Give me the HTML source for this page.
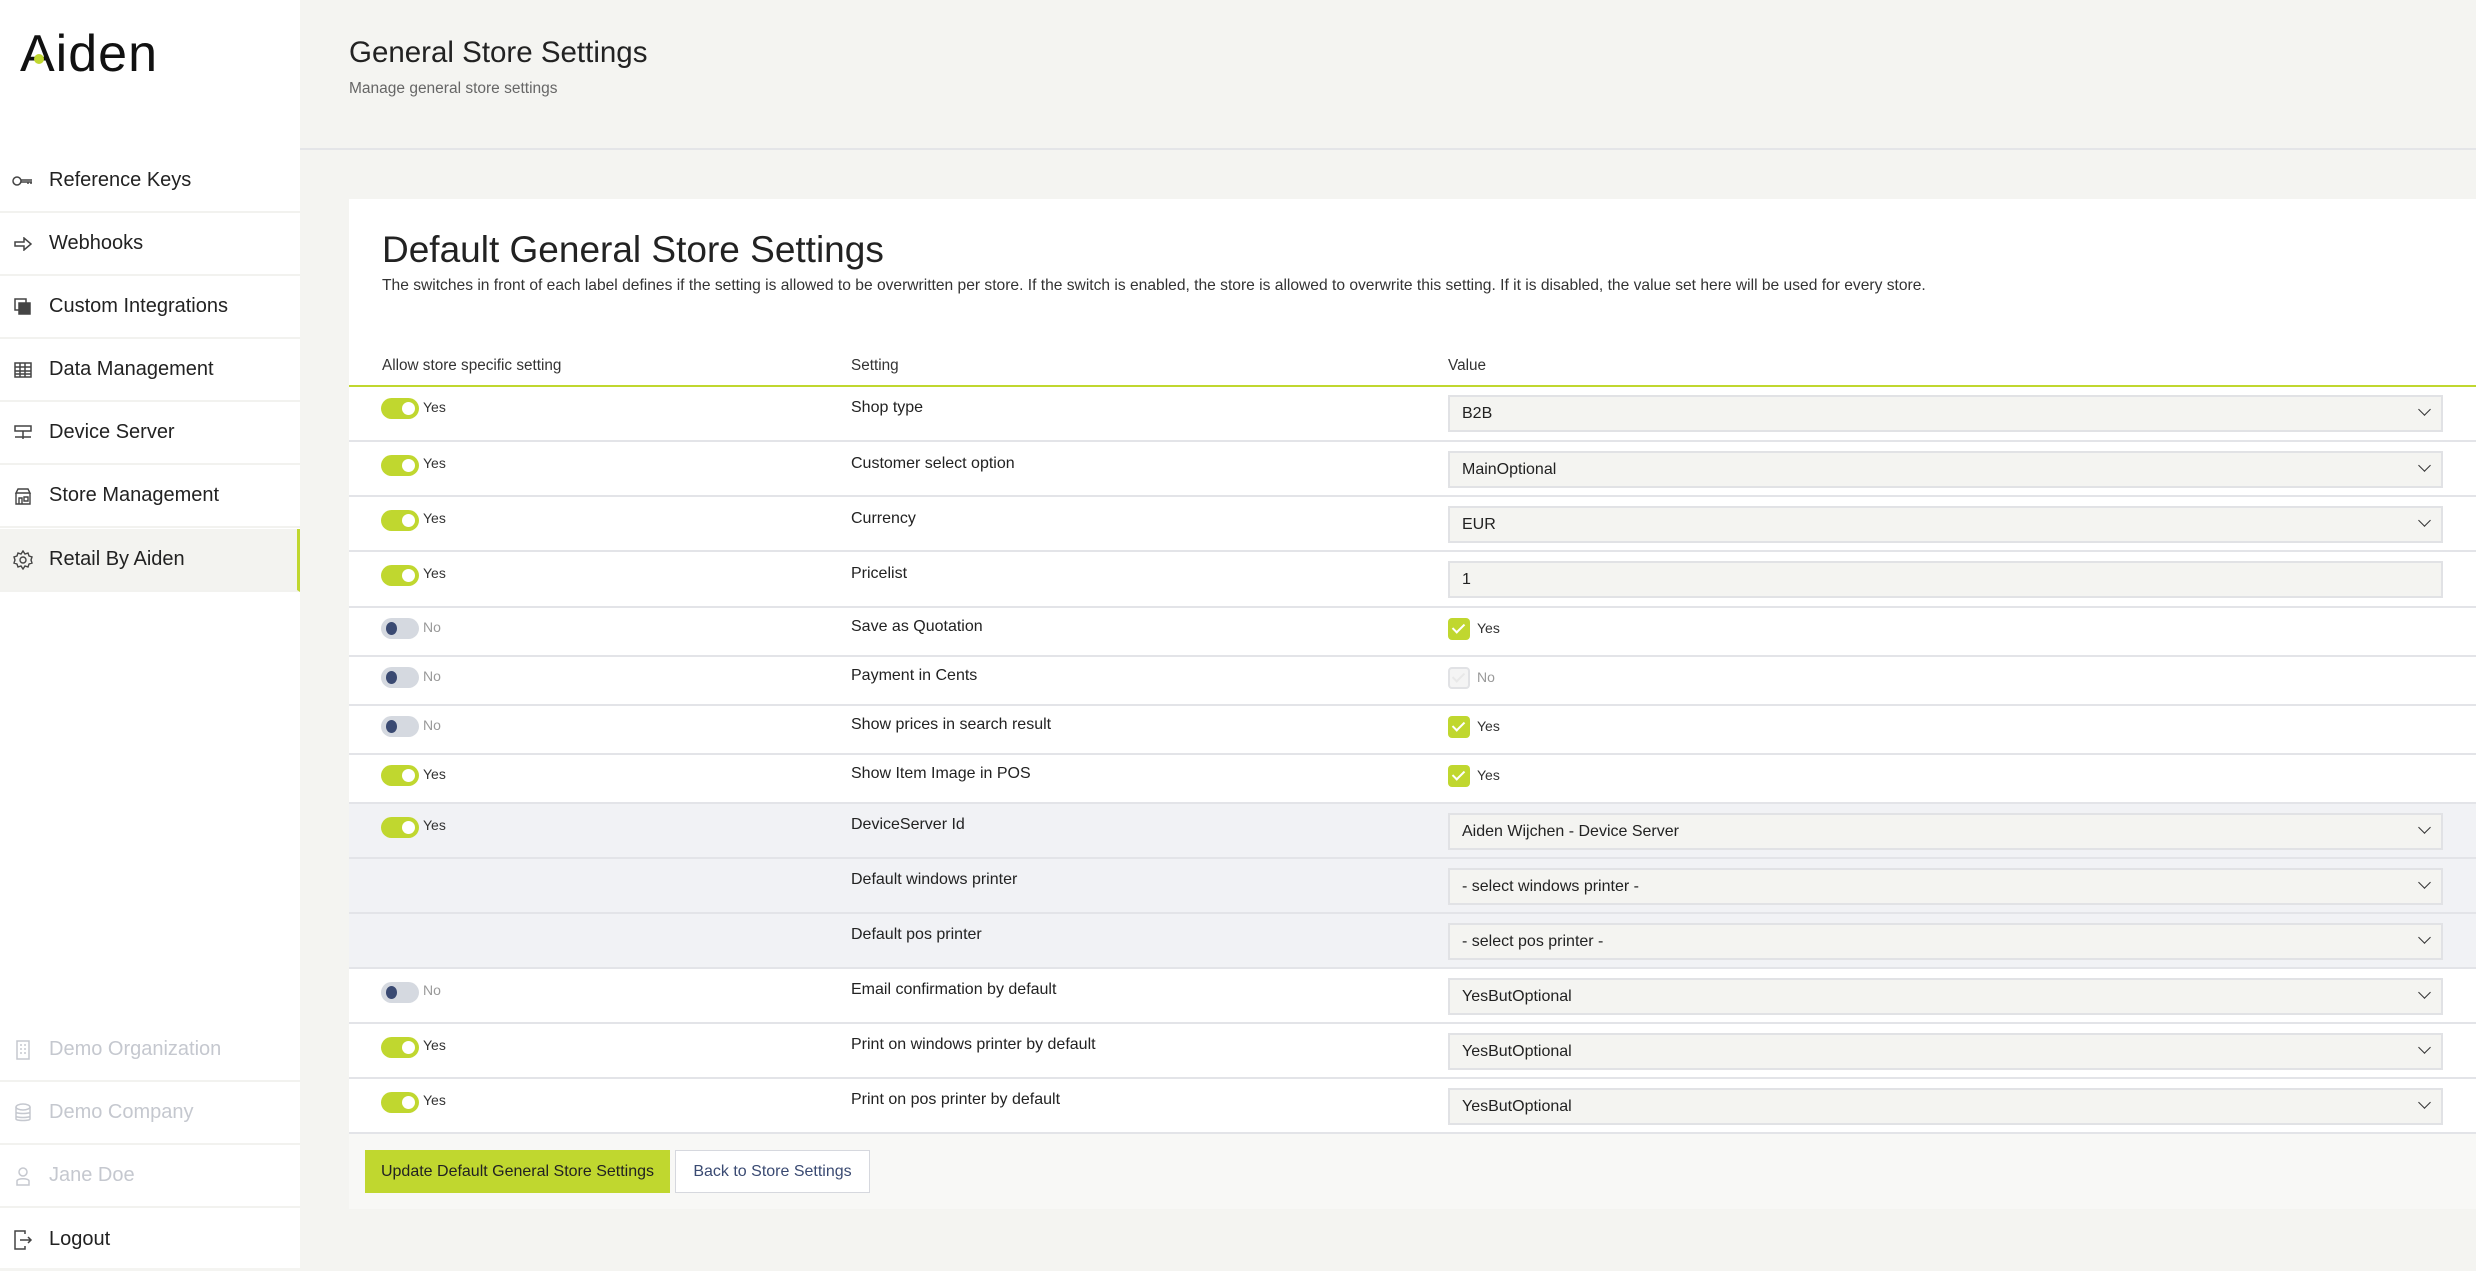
<!DOCTYPE html>
<html><head><meta charset="utf-8"><style>
*{box-sizing:border-box;margin:0;padding:0}
body{width:2476px;height:1268px;background:#f4f4f1;font-family:"Liberation Sans",sans-serif;color:#222;position:relative;overflow:hidden}
.side{position:absolute;left:0;top:0;width:300px;height:1268px;background:#fff}
.logo{position:absolute;left:20px;top:24px;font-size:52px;font-weight:400;letter-spacing:1px;color:#111}
.logo .dot{position:absolute;left:14px;top:30px;width:10px;height:10px;border-radius:50%;background:#c0d72f}
.nav{position:absolute;left:0;width:300px;height:63px;border-bottom:2px solid #f2f2ef;font-size:20px;color:#222;display:flex;align-items:center}
.nav .ic{position:absolute;left:12px;width:22px;height:22px;display:flex;align-items:center;justify-content:center}
.nav span.t{position:absolute;left:49px}
.nav.act{background:#f3f3f0;border-right:3px solid #c0d72f}
.nav.dim{color:#c5c8cf}
.hdr{position:absolute;left:300px;top:0;right:0;height:150px;border-bottom:2px solid #e4e5e8}
.hdr h1{position:absolute;left:49px;top:36px;font-size:29.5px;font-weight:400;color:#222}
.hdr p{position:absolute;left:49px;top:80px;font-size:15.5px;color:#666}
.card{position:absolute;left:349px;top:199px;width:2127px;height:1010px;background:#fff}
.card h2{position:absolute;left:33px;top:30px;font-size:37px;font-weight:400;color:#222}
.card .desc{position:absolute;left:33px;top:78px;font-size:15.6px;color:#333}
.th{position:absolute;top:158px;font-size:15.3px;color:#333}
.hl{position:absolute;left:0;right:0;top:186px;height:2px;background:#c0d72f}
.row{position:absolute;left:0;right:0;border-bottom:2px solid #e3e4e8}
.row.g{background:#f1f2f5}
.tg{position:absolute;left:32px;width:38px;height:21px;border-radius:11px;background:#c0d72f}
.tg::after{content:"";position:absolute;right:4px;top:4px;width:13px;height:13px;border-radius:50%;background:#fff}
.tg.off{background:#d5d9e0}
.tg.off::after{left:5px;right:auto;background:#3a4a72;width:11px}
.yl{position:absolute;left:74px;font-size:14px;color:#333}
.yl.off{color:#999}
.lb{position:absolute;left:502px;font-size:16px;color:#222}
.sel{position:absolute;left:1099px;width:995px;height:37px;background:#f4f4f1;border:2px solid #e1e2e5;font-size:16px;padding:8px 12px;color:#222}
.sel .ch{position:absolute;right:12px;top:8px;width:9px;height:9px;border-right:1.6px solid #333;border-bottom:1.6px solid #333;transform:rotate(45deg)}
.cb{position:absolute;left:1099px;width:22px;height:22px;border-radius:4px;background:#c0d72f}
.cb::after{content:"";position:absolute;left:7px;top:3px;width:5px;height:10px;border-right:2px solid #fff;border-bottom:2px solid #fff;transform:rotate(45deg)}
.cb.off{background:#f4f4f4;border:2px solid #e1e2e5}
.cb.off::after{border-color:#e8e8e8;left:5px;top:1px}
.cl{position:absolute;left:1128px;font-size:14px;color:#333}
.cl.off{color:#999}
.btn{position:absolute;top:951px;height:43px;font-size:16px;display:flex;align-items:center;justify-content:center}
</style></head><body>
<div class="side">
<div class="logo">Aiden<span class="dot"></span></div>
<div class="nav" style="top:150px"><span class="ic"><svg width="22" height="14" viewBox="0 0 22 14" fill="none" stroke="#444" stroke-width="1.5"><circle cx="5" cy="7" r="4"/><path d="M9 6h11M9 8h11M16 8v2M19 8v2"/></svg></span><span class="t">Reference Keys</span></div>
<div class="nav" style="top:213px"><span class="ic"><svg width="18" height="14" viewBox="0 0 18 14" fill="none" stroke="#444" stroke-width="1.5"><path d="M1 5h9V1l7 6-7 6V9H1z"/></svg></span><span class="t">Webhooks</span></div>
<div class="nav" style="top:276px"><span class="ic"><svg width="18" height="18" viewBox="0 0 18 18" fill="none" stroke="#444" stroke-width="1.5"><rect x="1" y="1" width="11" height="11"/><rect x="5" y="5" width="11" height="11" fill="#444"/></svg></span><span class="t">Custom Integrations</span></div>
<div class="nav" style="top:339px"><span class="ic"><svg width="18" height="16" viewBox="0 0 18 16" fill="none" stroke="#444" stroke-width="1.5"><rect x="1" y="1" width="16" height="14"/><path d="M1 5h16M1 9h16M1 12h16M6 1v14M11 1v14"/></svg></span><span class="t">Data Management</span></div>
<div class="nav" style="top:402px"><span class="ic"><svg width="18" height="16" viewBox="0 0 18 16" fill="none" stroke="#444" stroke-width="1.5"><rect x="1" y="1" width="16" height="5"/><path d="M9 6v8M1 12h16"/></svg></span><span class="t">Device Server</span></div>
<div class="nav" style="top:465px"><span class="ic"><svg width="18" height="18" viewBox="0 0 18 18" fill="none" stroke="#444" stroke-width="1.4"><path d="M2 6l2-4h10l2 4zM2 6v11h14V6M5 17v-6h3v6M10 10h4v4h-4z"/></svg></span><span class="t">Store Management</span></div>
<div class="nav act" style="top:529px"><span class="ic"><svg width="20" height="20" viewBox="0 0 20 20" fill="none" stroke="#444" stroke-width="1.4"><circle cx="10" cy="10" r="3"/><path d="M10 1l2 3 3-1 1 3 3 1-1 3 1 3-3 1-1 3-3-1-2 3-2-3-3 1-1-3-3-1 1-3-1-3 3-1 1-3 3 1z"/></svg></span><span class="t">Retail By Aiden</span></div>
<div class="nav dim" style="top:1019px"><span class="ic"><svg width="14" height="20" viewBox="0 0 14 20" fill="none" stroke="#c5c8cf" stroke-width="1.5"><rect x="1" y="1" width="12" height="18"/><path d="M4 5h2M8 5h2M4 9h2M8 9h2M4 13h2M8 13h2"/></svg></span><span class="t">Demo Organization</span></div>
<div class="nav dim" style="top:1082px"><span class="ic"><svg width="16" height="20" viewBox="0 0 16 20" fill="none" stroke="#c5c8cf" stroke-width="1.5"><ellipse cx="8" cy="4" rx="7" ry="3"/><path d="M1 4v12c0 2 14 2 14 0V4M1 9c0 2 14 2 14 0M1 13c0 2 14 2 14 0"/></svg></span><span class="t">Demo Company</span></div>
<div class="nav dim" style="top:1145px"><span class="ic"><svg width="16" height="20" viewBox="0 0 16 20" fill="none" stroke="#c5c8cf" stroke-width="1.5"><circle cx="8" cy="6" r="4"/><path d="M2 19v-4c0-3 12-3 12 0v4z"/></svg></span><span class="t">Jane Doe</span></div>
<div class="nav" style="top:1208px;border:none"><span class="ic"><svg width="20" height="20" viewBox="0 0 20 20" fill="none" stroke="#444" stroke-width="1.5"><path d="M12 4V1H2v18h10v-3M7 10h11M15 7l3 3-3 3"/></svg></span><span class="t">Logout</span></div>
</div>
<div class="hdr"><h1>General Store Settings</h1><p>Manage general store settings</p></div>
<div class="card">
<h2>Default General Store Settings</h2>
<div class="desc">The switches in front of each label defines if the setting is allowed to be overwritten per store. If the switch is enabled, the store is allowed to overwrite this setting. If it is disabled, the value set here will be used for every store.</div>
<div class="th" style="left:33px">Allow store specific setting</div>
<div class="th" style="left:502px">Setting</div>
<div class="th" style="left:1099px">Value</div>
<div class="hl"></div>

<div class="row" style="top:188px;height:55px"><div class="tg" style="top:11px"></div><div class="yl" style="top:12px">Yes</div><div class="lb" style="top:12px">Shop type</div><div class="sel" style="top:8px">B2B<span class="ch"></span></div></div>
<div class="row" style="top:243px;height:55px"><div class="tg" style="top:13px"></div><div class="yl" style="top:13px">Yes</div><div class="lb" style="top:13px">Customer select option</div><div class="sel" style="top:9px">MainOptional<span class="ch"></span></div></div>
<div class="row" style="top:298px;height:55px"><div class="tg" style="top:13px"></div><div class="yl" style="top:13px">Yes</div><div class="lb" style="top:13px">Currency</div><div class="sel" style="top:9px">EUR<span class="ch"></span></div></div>
<div class="row" style="top:353px;height:56px"><div class="tg" style="top:13px"></div><div class="yl" style="top:13px">Yes</div><div class="lb" style="top:13px">Pricelist</div><div class="sel" style="top:9px">1</div></div>
<div class="row" style="top:409px;height:49px"><div class="tg off" style="top:10px"></div><div class="yl off" style="top:11px">No</div><div class="lb" style="top:10px">Save as Quotation</div><div class="cb" style="top:10px"></div><div class="cl" style="top:12px">Yes</div></div>
<div class="row" style="top:458px;height:49px"><div class="tg off" style="top:10px"></div><div class="yl off" style="top:11px">No</div><div class="lb" style="top:10px">Payment in Cents</div><div class="cb off" style="top:10px"></div><div class="cl off" style="top:12px">No</div></div>
<div class="row" style="top:507px;height:49px"><div class="tg off" style="top:10px"></div><div class="yl off" style="top:11px">No</div><div class="lb" style="top:10px">Show prices in search result</div><div class="cb" style="top:10px"></div><div class="cl" style="top:12px">Yes</div></div>
<div class="row" style="top:556px;height:49px"><div class="tg" style="top:10px"></div><div class="yl" style="top:11px">Yes</div><div class="lb" style="top:10px">Show Item Image in POS</div><div class="cb" style="top:10px"></div><div class="cl" style="top:12px">Yes</div></div>
<div class="row g" style="top:605px;height:55px"><div class="tg" style="top:13px"></div><div class="yl" style="top:13px">Yes</div><div class="lb" style="top:12px">DeviceServer Id</div><div class="sel" style="top:9px">Aiden Wijchen - Device Server<span class="ch"></span></div></div>
<div class="row g" style="top:660px;height:55px"><div class="lb" style="top:12px">Default windows printer</div><div class="sel" style="top:9px">- select windows printer -<span class="ch"></span></div></div>
<div class="row g" style="top:715px;height:55px"><div class="lb" style="top:12px">Default pos printer</div><div class="sel" style="top:9px">- select pos printer -<span class="ch"></span></div></div>
<div class="row" style="top:770px;height:55px"><div class="tg off" style="top:13px"></div><div class="yl off" style="top:13px">No</div><div class="lb" style="top:12px">Email confirmation by default</div><div class="sel" style="top:9px">YesButOptional<span class="ch"></span></div></div>
<div class="row" style="top:825px;height:55px"><div class="tg" style="top:13px"></div><div class="yl" style="top:13px">Yes</div><div class="lb" style="top:12px">Print on windows printer by default</div><div class="sel" style="top:9px">YesButOptional<span class="ch"></span></div></div>
<div class="row" style="top:880px;height:55px"><div class="tg" style="top:13px"></div><div class="yl" style="top:13px">Yes</div><div class="lb" style="top:12px">Print on pos printer by default</div><div class="sel" style="top:9px">YesButOptional<span class="ch"></span></div></div>
<div style="position:absolute;left:0;right:0;top:935px;bottom:0;background:#f8f8f6"></div>
<div class="btn" style="left:16px;width:305px;background:#c0d72f;color:#222">Update Default General Store Settings</div>
<div class="btn" style="left:326px;width:195px;background:#fff;border:1px solid #d6d8de;color:#3a4a72">Back to Store Settings</div>
</div>
</body></html>
